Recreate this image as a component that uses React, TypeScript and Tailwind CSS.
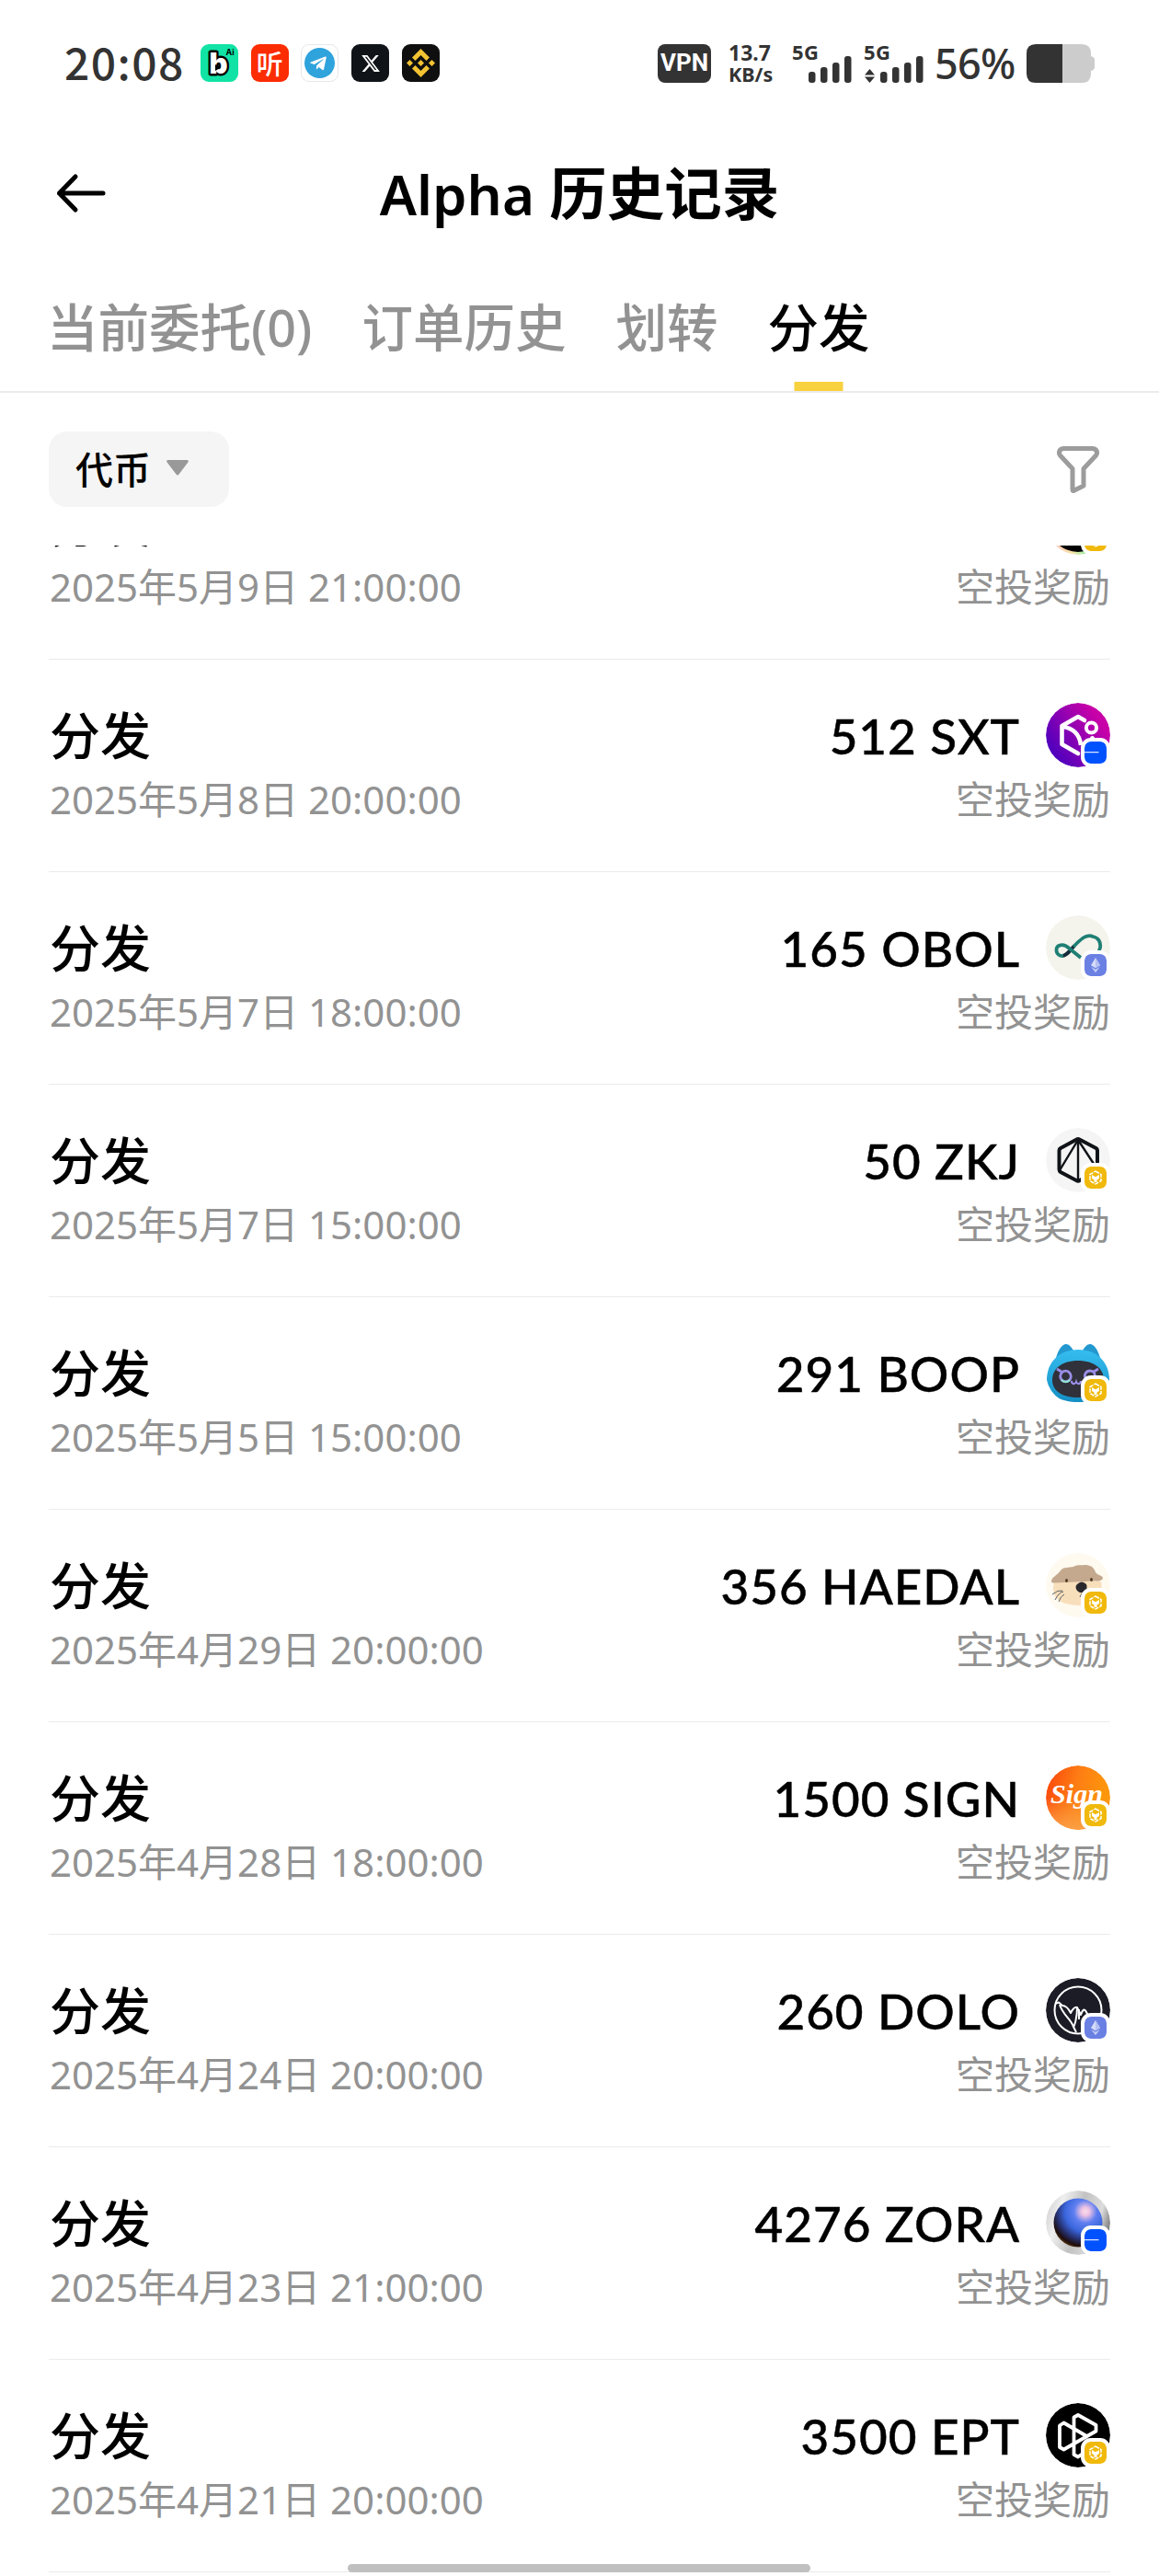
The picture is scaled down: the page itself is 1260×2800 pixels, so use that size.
import type { ReactNode } from "react";
import { FaTelegramPlane } from "react-icons/fa";
import { FaXTwitter } from "react-icons/fa6";
import { SiBinance } from "react-icons/si";

type Chain = "bsc" | "base" | "eth";

type Distribution = {
  amount: string;
  time: string;
  chain: Chain;
  icon: ReactNode;
};

const tabs = ["当前委托(0)", "订单历史", "划转", "分发"];

const distributions: Distribution[] = [
  { amount: "", time: "2025年5月9日 21:00:00", chain: "bsc", icon: <PastelIcon /> },
  { amount: "512 SXT", time: "2025年5月8日 20:00:00", chain: "base", icon: <SxtIcon /> },
  { amount: "165 OBOL", time: "2025年5月7日 18:00:00", chain: "eth", icon: <ObolIcon /> },
  { amount: "50 ZKJ", time: "2025年5月7日 15:00:00", chain: "bsc", icon: <ZkjIcon /> },
  { amount: "291 BOOP", time: "2025年5月5日 15:00:00", chain: "bsc", icon: <BoopIcon /> },
  { amount: "356 HAEDAL", time: "2025年4月29日 20:00:00", chain: "bsc", icon: <HaedalIcon /> },
  { amount: "1500 SIGN", time: "2025年4月28日 18:00:00", chain: "bsc", icon: <SignIcon /> },
  { amount: "260 DOLO", time: "2025年4月24日 20:00:00", chain: "eth", icon: <DoloIcon /> },
  { amount: "4276 ZORA", time: "2025年4月23日 21:00:00", chain: "base", icon: <ZoraIcon /> },
  { amount: "3500 EPT", time: "2025年4月21日 20:00:00", chain: "bsc", icon: <EptIcon /> },
];

function PastelIcon() {
  return (
    <svg viewBox="0 0 70 70" className="size-full">
      <defs>
        <linearGradient id="pastel">
          <stop offset="0" stopColor="#f7b7c8" />
          <stop offset="0.4" stopColor="#fbe3a8" />
          <stop offset="0.6" stopColor="#a5eda5" />
          <stop offset="1" stopColor="#9fd0fb" />
        </linearGradient>
      </defs>
      <circle cx="35" cy="35" r="35" fill="url(#pastel)" />
      <circle cx="35" cy="35" r="32" />
    </svg>
  );
}

function SxtIcon() {
  return (
    <svg viewBox="0 0 70 70" className="size-full" fill="none" stroke="#fff" strokeWidth="4.6">
      <defs>
        <linearGradient id="sxt" x1="0.15" y1="0.8" x2="0.85" y2="0.3">
          <stop offset="0" stopColor="#5200bd" />
          <stop offset="1" stopColor="#c800a8" />
        </linearGradient>
      </defs>
      <circle cx="35" cy="35" r="35" fill="url(#sxt)" stroke="none" />
      <path d="M42 19 35 15 17.500 25V45L35 55" strokeLinejoin="round" strokeLinecap="round" />
      <path d="M18 26C29 27 37 34 38 46" />
      <circle cx="49.500" cy="27" r="5.600" strokeWidth="4" />
      <circle cx="50.500" cy="38.500" r="2.500" fill="#fff" stroke="none" />
    </svg>
  );
}

function ObolIcon() {
  return (
    <svg viewBox="0 0 70 70" className="size-full" fill="none" strokeWidth="3.8">
      <circle cx="35" cy="35" r="35" fill="#f4f3ec" />
      <path d="M18 44C22 44 25 40 31 33" stroke="#152a3a" />
      <path
        d="M38 46 25 35.500C19 30 11.500 32 11.500 37.500 11.500 42 15 44.500 19 44M30 34 35 29C41 23 47 21 51 23 57 24 60 29 59 35L57 41"
        stroke="#1f7f74"
      />
    </svg>
  );
}

function ZkjIcon() {
  return (
    <svg viewBox="0 0 70 70" className="size-full" fill="none" stroke="#101418" strokeLinejoin="round">
      <circle cx="35" cy="35" r="35" fill="#f5f5f5" stroke="none" />
      <path d="M56 42V24.500Q56 23 54.500 22L36.500 12.500Q35 11.500 33.500 12.500L16 22Q14.500 23 14.500 24.500V45Q14.500 47 16 48L33 57Q35 58.500 37 57L42 54" strokeWidth="4" />
      <path d="M35 13 15 46M35 13V58M35 13 54 42" strokeWidth="2.4" />
    </svg>
  );
}

function BoopIcon() {
  return (
    <svg viewBox="0 0 70 70" className="size-full">
      <defs>
        <linearGradient id="boop" x2="0" y2="1">
          <stop offset="0" stopColor="#36bdf0" />
          <stop offset="1" stopColor="#148fc4" />
        </linearGradient>
      </defs>
      <path d="M11 19C13 12 16 6 20 4.500 24 3 27 6 30 11H40C43 6 46 3 50 4.500 54 6 57 12 59 19Z" fill="#2398cf" />
      <path d="M35 10C14 10 1 24 1 43 1 59 16 67 35 67S69 59 69 43C69 24 56 10 35 10Z" fill="url(#boop)" />
      <path d="M35 22C17 22 7 31 7 43S18 62 35 62 63 55 63 43 53 22 35 22Z" fill="#30313a" />
      <g fill="none" stroke="#9b8ee8" strokeWidth="2.800">
        <circle cx="21.500" cy="39" r="5.800" />
        <path d="M17 34 12 31M43 41C41 37 44 33 48 33S54 36 53 40M52 34 57 31" />
        <path d="M28 44C28 48 32 48 33 45 34 48 38 48 38 44" strokeWidth="2.200" />
      </g>
      <path d="M17 43A6 6 0 0 0 26 43" fill="none" stroke="#8fe3d2" strokeWidth="2.600" />
    </svg>
  );
}

function HaedalIcon() {
  return (
    <svg viewBox="0 0 70 70" className="size-full">
      <circle cx="35" cy="35" r="35" fill="#fefaf0" />
      <path d="M9 31H60C62 45 60 57 38 57 18 57 8 51 8 38Z" fill="#f8dfbb" />
      <path d="M6 31C6 26 12 25 16 19 19 15 25 16 30 15 35 12 40 14 42 13 48 13 52 15 54 21 57 25 62 24 62 28 61 30 57 31 54 30.500L9 32.500Q6 33 6 31Z" fill="#c4a98f" />
      <ellipse cx="22.500" cy="30" rx="1.400" ry="2" fill="#4c3920" />
      <ellipse cx="49.500" cy="29" rx="1.400" ry="2" fill="#4c3920" />
      <path d="M34 34Q39 29 44 34 46 39 42 42 38 45 34 41 31 37 34 34Z" fill="#29282c" />
      <path d="M39 44 37 48M7 45Q13 40 18 41M10 51Q14 43 19 42M14 53Q16 47 20 45" fill="none" stroke="#5c6066" strokeWidth="1" />
    </svg>
  );
}

function SignIcon() {
  return (
    <svg viewBox="0 0 70 70" className="size-full">
      <defs>
        <linearGradient id="sign" x1="0" y1="0.3" x2="0.9" y2="0.5">
          <stop offset="0" stopColor="#fb4a0c" />
          <stop offset="0.5" stopColor="#fd7d14" />
          <stop offset="1" stopColor="#fe960c" />
        </linearGradient>
        <linearGradient id="signGlow" x2="0" y2="1">
          <stop offset="0.5" stopColor="#fba24a" stopOpacity="0" />
          <stop offset="1" stopColor="#fba24a" stopOpacity="0.9" />
        </linearGradient>
      </defs>
      <circle cx="35" cy="35" r="35" fill="url(#sign)" />
      <circle cx="35" cy="35" r="35" fill="url(#signGlow)" />
      <text
        x="5"
        y="41"
        fill="#fff"
        fontSize="30"
        fontStyle="italic"
        fontWeight="700"
        fontFamily="Liberation Serif, serif"
        textLength="57"
        lengthAdjust="spacingAndGlyphs"
      >
        Sign
      </text>
    </svg>
  );
}

function DoloIcon() {
  return (
    <svg viewBox="0 0 70 70" className="size-full" fill="none" stroke="#fff" strokeWidth="2" strokeLinejoin="round">
      <circle cx="35" cy="35" r="35" fill="#1c1c27" stroke="none" />
      <circle cx="35" cy="35" r="25.500" />
      <path d="M10 28 14 26.500 18 30C22 30 25 34 27 38 29 34 31 31 34 32 34 44 31 52 30 53 27 44 19 41 15 29" />
      <path d="M33 59 30 53M34 32 38 40C40 34 42 33 44 37L46 41M36 34V45" />
    </svg>
  );
}

function ZoraIcon() {
  return (
    <svg viewBox="0 0 70 70" className="size-full">
      <defs>
        <linearGradient id="zoraRing" x1="0" y1="0.3" x2="1" y2="0.6">
          <stop offset="0" stopColor="#d5d5d5" />
          <stop offset="0.2" stopColor="#efefef" />
          <stop offset="0.5" stopColor="#c2c2c2" />
          <stop offset="0.8" stopColor="#dddddd" />
          <stop offset="1" stopColor="#777" />
        </linearGradient>
        <radialGradient id="zoraBall" cx="0.65" cy="0.27" r="0.84">
          <stop offset="0" stopColor="#fbdcea" />
          <stop offset="0.1" stopColor="#eec3e4" />
          <stop offset="0.28" stopColor="#5f7ff0" />
          <stop offset="0.5" stopColor="#3a66dd" />
          <stop offset="0.7" stopColor="#26306f" />
          <stop offset="0.85" stopColor="#1e0d0c" />
          <stop offset="1" stopColor="#8a5a1c" />
        </radialGradient>
      </defs>
      <circle cx="35" cy="35" r="35" fill="url(#zoraRing)" />
      <circle cx="35" cy="35" r="26.500" fill="url(#zoraBall)" />
    </svg>
  );
}

function EptIcon() {
  return (
    <svg viewBox="0 0 70 70" className="size-full" fill="none" stroke="#fff" strokeWidth="3.800" strokeLinejoin="round">
      <circle cx="35" cy="35" r="35" fill="#000" stroke="none" />
      <path d="M46 37 19.500 21.500 15 24.500V48L19.500 50.500 54.500 30.500V24L35 13 30.500 15.500V56L35 58.500 40 55" />
    </svg>
  );
}

function ChainBadge({ chain }: { chain: Chain }) {
  return (
    <div className="absolute right-0 bottom-0 size-8 overflow-hidden rounded-[11px] border-4 border-white bg-white">
      {chain === "bsc" && (
        <svg viewBox="0 0 24 24" className="size-6">
          <rect width="24" height="24" rx="6" fill="#f0b90b" />
          <path d="M12 5 18 8.500V15.500L12 19 6 15.500V8.500Z" fill="none" stroke="#fff" strokeWidth="1.500" strokeDasharray="4.500 1.200" />
          <path d="M8 9 12 11.200 16 9V13L13.500 14.500V17H10.500V14.500L8 13Z" fill="#fff" />
        </svg>
      )}
      {chain === "base" && (
        <svg viewBox="0 0 24 24" className="size-6">
          <rect width="24" height="24" rx="6" fill="#0052ff" />
          <path d="M0 11.700H15.500" stroke="#dce6ff" strokeWidth="1.200" />
        </svg>
      )}
      {chain === "eth" && (
        <svg viewBox="0 0 24 24" className="size-6">
          <rect width="24" height="24" rx="6" fill="#6b80e3" />
          <path d="M12 4 17 12.300 12 15.200 7 12.300Z" fill="#d5dcf8" />
          <path d="M7.300 14 12 16.700 16.700 14 12 20.300Z" fill="#c3ccf4" />
          <path d="M12 4 17 12.300 12 15.200Z" fill="#b4c0f1" />
        </svg>
      )}
    </div>
  );
}

function Signal({ active }: { active?: boolean }) {
  return (
    <svg viewBox="0 0 64 42" className="h-[42px] w-16 overflow-visible" fill="#333">
      <text x="-1" y="16.500" fontSize="22" fontWeight="700" fontFamily="Noto Sans, sans-serif" textLength="29">
        5G
      </text>
      {active && <path d="M0 33.500 5.500 27 11 33.500ZM0 35.500H11L5.500 42Z" />}
      <rect x="17" y="30" width="7.500" height="12" rx="3" />
      <rect x="30" y="25" width="7.500" height="17" rx="3" />
      <rect x="43" y="20" width="7.500" height="22" rx="3" />
      <rect x="56" y="13" width="7.500" height="29" rx="3" />
    </svg>
  );
}

function StatusBar() {
  return (
    <div className="flex h-[137px] items-center pr-[70px] pl-[70px] text-[#333]">
      <span className="w-[148px] pb-[6px] font-['Noto_Sans_CJK_SC',sans-serif] text-[48px] leading-none font-medium tracking-[1.4px]">
        20:08
      </span>
      <div className="flex gap-[13.7px]">
        <svg viewBox="0 0 41 41" className="size-[41px]" fontFamily="Inter, sans-serif">
          <rect width="41" height="41" rx="9" fill="#10e3a5" />
          <text x="9.500" y="32" fontSize="31" fontWeight="900" fill="#fff" stroke="#000" strokeWidth="5" strokeLinejoin="round" paintOrder="stroke">
            b
          </text>
          <path d="M16 22 22 25.500 16 29Z" />
          <text x="27.500" y="12" fontSize="9" fontWeight="700">
            Ai
          </text>
        </svg>
        <div className="flex size-[41px] items-center justify-center rounded-[9px] bg-[#fc2c03] font-['Noto_Sans_CJK_SC',sans-serif] text-[29px] leading-none font-medium text-white">
          听
        </div>
        <div className="flex size-[41px] items-center justify-center rounded-[9px] border border-gray-200 bg-white">
          <div className="flex size-[33px] items-center justify-center rounded-full bg-[#2fa3dc]">
            <FaTelegramPlane className="mr-[3px] size-5 text-white" />
          </div>
        </div>
        <div className="flex size-[41px] items-center justify-center rounded-[9px] bg-[#101418]">
          <FaXTwitter className="size-[22px] text-white" />
        </div>
        <div className="flex size-[41px] items-center justify-center rounded-[9px] bg-[#0f0f0f]">
          <SiBinance className="size-[31px] text-[#f3c332]" />
        </div>
      </div>
      <div className="ml-auto flex items-center font-['Noto_Sans',sans-serif]">
        <div className="flex h-[42px] w-[58px] items-center justify-center rounded-lg bg-[#333] font-['Roboto',sans-serif] text-[26px] font-bold text-white">
          VPN
        </div>
        <div className="ml-[19px] w-[70px] text-[23px] leading-[24px] font-bold">
          <div>13.7</div>
          <div className="text-[21.5px]">KB/s</div>
        </div>
        <Signal />
        <div className="ml-[14px]">
          <Signal active />
        </div>
        <span className="ml-[12px] w-[100px] text-[45px] leading-none font-medium tracking-[-0.8px]">56%</span>
        <svg viewBox="0 0 74 42" className="h-[42px] w-[74px]">
          <path d="M39 0H60Q70 0 70 10V13Q74 14 74 17V25Q74 28 70 29V32Q70 42 60 42H39Z" fill="#ccc" />
          <path d="M39 0H10Q0 0 0 10V32Q0 42 10 42H39Z" fill="#333" />
        </svg>
      </div>
    </div>
  );
}

function DistributionRow({ item }: { item: Distribution }) {
  return (
    <li className="h-[231px] border-b border-[#ebebeb] pt-[47px]">
      <div className="flex h-[70px] items-center justify-between text-black">
        <span className="pb-[2px] pl-[1px] text-[55px] leading-none font-medium">分发</span>
        <div className="flex items-center">
          <span className="font-['Lato',sans-serif] text-[53px] leading-none font-medium tracking-[1px] [-webkit-text-stroke:0.5px_black]">
            {item.amount}
          </span>
          <div className="relative ml-[28px] size-[70px] overflow-hidden rounded-full">{item.icon}</div>
          <div className="relative h-[70px] w-0">
            <ChainBadge chain={item.chain} />
          </div>
        </div>
      </div>
      <div className="mt-[7px] flex h-14 items-center justify-between pl-[1px] text-[42px] leading-none text-[#929292]">
        <span>{item.time}</span>
        <span>空投奖励</span>
      </div>
    </li>
  );
}

export default function App() {
  return (
    <div className="relative flex h-[2800px] w-[1260px] flex-col overflow-hidden bg-white font-['Noto_Sans','Noto_Sans_CJK_SC',sans-serif]">
      <StatusBar />

      <header className="grid h-[146px] grid-cols-[1fr_auto_1fr] items-center px-[53px] text-black">
        <svg viewBox="0 0 56 44" className="ml-[8px] h-11 w-14" fill="none" stroke="#000" strokeWidth="5" strokeLinecap="round" strokeLinejoin="round">
          <path d="M21 4 3.500 22 21 40M3.500 22H51" />
        </svg>
        <h1 className="text-[62.5px] leading-none font-semibold">
          <span className="text-[60px]">Alpha</span> 历史记录
        </h1>
      </header>

      <nav className="flex h-[144px] gap-[54px] border-b-2 border-[#ebebeb] pr-[53px] pl-[51px] text-[55.5px] leading-none font-medium">
        {tabs.map((tab) => (
          <button
            key={tab}
            className={
              tab === "分发"
                ? "relative flex h-[142px] items-center pt-[4px] text-black"
                : "flex h-[142px] items-center pt-[4px] text-[#929292]"
            }
          >
            {tab}
            {tab === "分发" && (
              <span className="absolute bottom-0 left-1/2 h-[10px] w-[53px] -translate-x-1/2 bg-[#f8d13e]" />
            )}
          </button>
        ))}
      </nav>

      <div className="flex h-[166px] items-center justify-between px-[53px]">
        <button className="flex h-[82px] w-[196px] items-center rounded-[20px] bg-[#f5f5f5] pl-[29px] text-[41px] leading-none font-medium text-black">
          代币
          <svg viewBox="0 0 24 17" className="mb-[3px] ml-[17px] h-[17px] w-6" fill="#999">
            <path d="M1.500 0H22.500Q25 .5 23 3L13.500 15.500Q12 17.500 10.500 15.500L1 3Q-1 .5 1.500 0Z" />
          </svg>
        </button>
        <svg viewBox="0 0 46 51" className="mr-[12px] h-[51px] w-[46px]" fill="none" stroke="#9c9c9c" strokeWidth="5" strokeLinejoin="round">
          <path d="M7 2.500H39Q44 3 43.500 8L42.500 10 29 24.500V43L18 48.500Q17 48.500 17 46.500V24.500L3.500 10 2.500 8Q2 3 7 2.500Z" />
        </svg>
      </div>

      {/* list is scrolled so the first row is partly hidden */}
      <div className="h-[2207px] overflow-hidden px-[53px]">
        <ul className="-mt-[107px]">
          {distributions.map((item) => (
            <DistributionRow key={item.time} item={item} />
          ))}
        </ul>
      </div>

      <div className="absolute bottom-1 left-[378px] h-[9px] w-[503px] rounded-full bg-[#c0c0c0]" />
    </div>
  );
}
